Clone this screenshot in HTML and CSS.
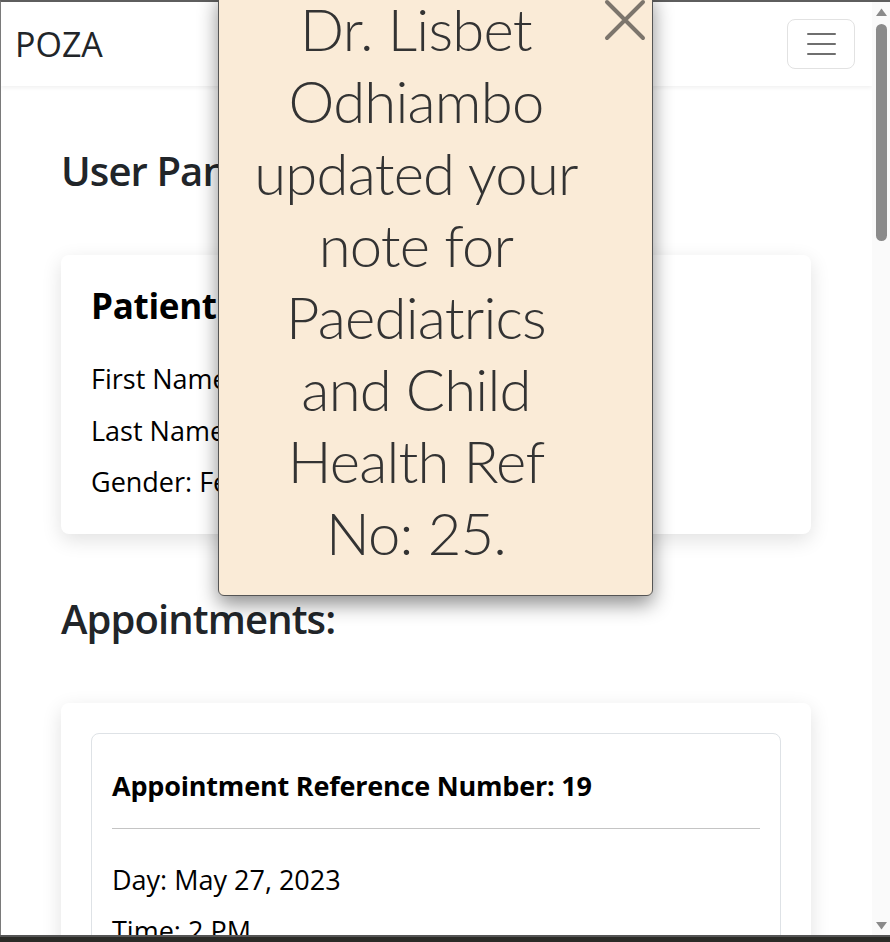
FILE: index.html
```html
<!DOCTYPE html>
<html lang="en">
<head>
<meta charset="utf-8">
<title>POZA – User Panel</title>
<link rel="stylesheet" href="styles.css">
</head>
<body>
<div class="window">
  <div class="viewport">
    <nav class="navbar">
      <a class="brand" href="#">POZA</a>
      <button class="toggler" type="button" aria-label="Toggle navigation">
        <span class="toggler-bar"></span>
        <span class="toggler-bar"></span>
        <span class="toggler-bar"></span>
      </button>
    </nav>
    <main class="container">
      <h2 class="section-title">User Panel</h2>
      <section class="card">
        <h3 class="card-title">Patient Information</h3>
        <p class="field">First Name: Amina</p>
        <p class="field">Last Name: Otieno</p>
        <p class="field">Gender: Female</p>
      </section>
      <h2 class="section-title">Appointments:</h2>
      <section class="card">
        <article class="appt">
          <h4 class="appt-title">Appointment Reference Number: 19</h4>
          <hr class="appt-rule">
          <p class="field">Day: May 27, 2023</p>
          <p class="field">Time: 2 PM</p>
          <p class="field">Department: Paediatrics</p>
        </article>
      </section>
    </main>
  </div>
  <div class="scrollbar">
    <svg class="sb-arrow" width="11" height="8" viewBox="0 0 11 8"><path d="M0 8 L5.5 0.5 L11 8 Z"/></svg>
    <div class="sb-thumb"></div>
    <div class="sb-space"></div>
    <svg class="sb-arrow" width="11" height="8" viewBox="0 0 11 8"><path d="M0 0 L5.5 7.5 L11 0 Z"/></svg>
  </div>
</div>
<div class="taskbar"></div>
<div class="toast" role="alert">
  <button class="toast-close" type="button" aria-label="Close">
    <svg width="44" height="44" viewBox="0 0 44 44"><path d="M4 4 L40 40 M40 4 L4 40"/></svg>
  </button>
  <p class="toast-text">Dr. Lisbet Odhiambo updated your note for Paediatrics and Child Health Ref No: 25.</p>
</div>
</body>
</html>
```
FILE: styles.css
```css
html, body {
  margin: 0;
  padding: 0;
}

body {
  height: 942px;
  overflow: hidden;
  display: flex;
  flex-direction: column;
  background: #fff;
  font-family: "Open Sans", "Noto Sans", sans-serif;
  color: #000;
}

.window {
  flex: 1;
  min-height: 0;
  display: flex;
  border-top: 2px solid #5e5e5e;
  border-left: 1px solid #7a7a7a;
}

.viewport {
  flex: 1;
  min-width: 0;
  overflow: hidden;
  background: #fff;
}

/* navbar */
.navbar {
  position: relative;
  z-index: 1;
  height: 84px;
  display: flex;
  align-items: center;
  justify-content: space-between;
  padding: 0 17px 0 14px;
  background: #fff;
  box-shadow: 0 2px 4px rgba(0, 0, 0, 0.06);
}

.brand {
  font-size: 34px;
  color: #212529;
  text-decoration: none;
  line-height: normal;
}

.toggler {
  width: 68px;
  height: 50px;
  box-sizing: border-box;
  border: 1px solid #e2e2e2;
  border-radius: 8px;
  background: transparent;
  display: flex;
  flex-direction: column;
  align-items: center;
  justify-content: center;
  gap: 8px;
  padding: 0;
}

.toggler-bar {
  display: block;
  width: 29px;
  height: 2px;
  background: #6f6f6f;
  border-radius: 1px;
}

/* content */
.container {
  padding: 61px 61px 0 60px;
}

.section-title {
  margin: 0 0 60px;
  font-size: 40px;
  font-weight: 600;
  line-height: 48px;
  color: #212529;
  letter-spacing: -0.9px;
}

.card {
  background: #fff;
  border-radius: 8px;
  box-shadow: 0 6px 20px rgba(0, 0, 0, 0.12);
  padding: 30px 30px 31px;
  margin-bottom: 61px;
}

.card-title {
  margin: 0 0 32px;
  font-size: 35px;
  font-weight: 700;
  line-height: 42px;
  letter-spacing: -0.3px;
}

.field {
  margin: 0 0 11px;
  font-size: 27px;
  line-height: 40.5px;
}

.field:last-child {
  margin-bottom: 0;
}

.appt {
  border: 1px solid #dee2e6;
  border-radius: 8px;
  padding: 36px 20px 20px;
}

.appt-title {
  margin: 0 0 26px;
  font-size: 27px;
  font-weight: 700;
  line-height: 32.4px;
  letter-spacing: -0.2px;
}

.appt-rule {
  border: 0;
  border-top: 1px solid #c4c4c4;
  margin: 0 0 31px;
}

/* fake scrollbar */
.scrollbar {
  flex: none;
  width: 18px;
  box-sizing: border-box;
  background: #fafafa;
  display: flex;
  flex-direction: column;
  align-items: center;
  padding: 6px 0 5px;
}

.sb-arrow {
  display: block;
  fill: #8a8a8a;
}

.sb-thumb {
  margin-top: 8px;
  width: 11px;
  height: 217px;
  border-radius: 6px;
  background: #8b8b8b;
}

.sb-space {
  flex: 1;
}

.taskbar {
  flex: none;
  height: 7px;
  background: linear-gradient(#555 0, #555 2px, #2b2b27 2px);
}

/* notification */
.toast {
  position: fixed;
  left: 218px;
  top: -8px;
  width: 435px;
  box-sizing: border-box;
  padding: 0 66px 26px 27px;
  background: #faebd7;
  border: 1px solid #555;
  border-radius: 6px;
  box-shadow: 0 8px 20px rgba(0, 0, 0, 0.45);
  z-index: 10;
}

.toast-text {
  margin: 0;
  font-family: "Lato", "Open Sans", sans-serif;
  font-weight: 300;
  font-size: 58px;
  line-height: 72px;
  letter-spacing: -0.8px;
  text-align: center;
  color: #333;
}

.toast-close {
  position: absolute;
  top: 5px;
  right: 5px;
  padding: 0;
  border: 0;
  background: transparent;
  line-height: 0;
}

.toast-close svg {
  display: block;
  stroke: #7c756c;
  stroke-width: 4;
  stroke-linecap: round;
  fill: none;
}
```
